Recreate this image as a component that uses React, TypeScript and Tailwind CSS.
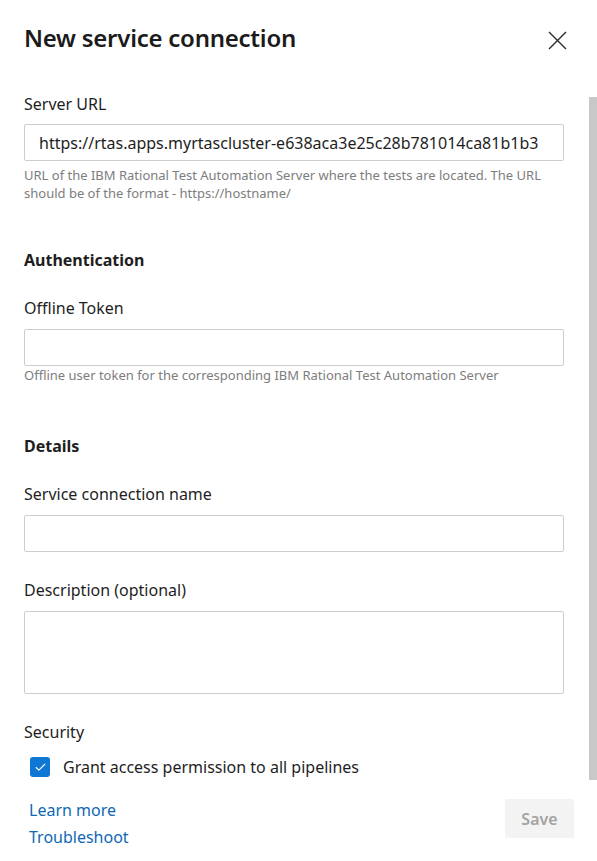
import { Check } from "lucide-react";

function Label({ children, className = "" }: { children: React.ReactNode; className?: string }) {
  return <div className={`text-[16px] leading-[22px] text-[#1e1e1e] ${className}`}>{children}</div>;
}

function Field({ className = "", h = "h-[37px]", value }: { className?: string; h?: string; value?: string }) {
  return (
    <div
      className={`${h} flex items-center rounded-[2px] border border-[#cdcdcd] bg-white px-[14px] text-[16px] text-[#1e1e1e] ${className}`}
    >
      {value ? <span className="truncate whitespace-nowrap">{value}</span> : null}
    </div>
  );
}

function Help({ children, className = "" }: { children: React.ReactNode; className?: string }) {
  return <div className={`text-[13px] leading-[18px] text-[#7d7d7d] ${className}`}>{children}</div>;
}

export default function App() {
  return (
    <div className="flex h-[861px] w-[597px] flex-col bg-white font-['Noto_Sans',sans-serif]">
      <div className="flex items-start justify-between pl-6 pt-[22px]">
        <h1 className="text-[24px] font-semibold leading-[32px] tracking-[-0.25px] text-[#1b1b1b]">
          New service connection
        </h1>
        <svg className="mr-[30px] mt-[9px]" width="19" height="19" viewBox="0 0 19 19">
          <path d="M1 1 L18 18 M18 1 L1 18" stroke="#2b2b2b" strokeWidth="1.4" fill="none" />
        </svg>
      </div>

      <div className="flex">
        <div className="flex-1 pl-6 pr-[25px]">
          <Label className="mt-[39px]">Server URL</Label>
          <Field className="mt-[9px]" value="https://rtas.apps.myrtascluster-e638aca3e25c28b781014ca81b1b3" />
          <Help className="mt-[5px]">
            URL of the IBM Rational Test Automation Server where the tests are located. The URL should be of the
            format - https://hostname/
          </Help>

          <Label className="mt-[47px] font-bold">Authentication</Label>
          <Label className="mt-[26px]">Offline Token</Label>
          <Field className="mt-[10px]" />
          <Help>Offline user token for the corresponding IBM Rational Test Automation Server</Help>

          <Label className="mt-[51px] font-bold">Details</Label>
          <Label className="mt-[26px]">Service connection name</Label>
          <Field className="mt-[10px]" />
          <Label className="mt-[27px]">Description (optional)</Label>
          <Field className="mt-[10px]" h="h-[83px]" />

          <Label className="mt-[27px]">Security</Label>
          <div className="mt-[13px] flex items-center gap-[13px] pl-[6px]">
            <div className="flex h-5 w-5 items-center justify-center rounded-[3px] bg-[#0f78d4]">
              <Check className="h-[13px] w-[13px] text-white" strokeWidth={2} />
            </div>
            <span className="text-[16px] leading-[22px] text-[#1e1e1e]">Grant access permission to all pipelines</span>
          </div>
        </div>
        <div className="w-2">
          <div className="mt-[43px] h-[683px] bg-[#c8c8c8]" />
        </div>
      </div>

      <div className="mt-[19px] flex items-start justify-between pl-[29px] pr-[23px]">
        <div className="flex flex-col gap-[5px] text-[16px] leading-[22px] text-[#0e68b5]">
          <a>Learn more</a>
          <a>Troubleshoot</a>
        </div>
        <button className="h-[39px] w-[69px] rounded-[2px] bg-[#f3f3f3] text-[16px] font-semibold text-[#a3a3a3]">
          Save
        </button>
      </div>
    </div>
  );
}
